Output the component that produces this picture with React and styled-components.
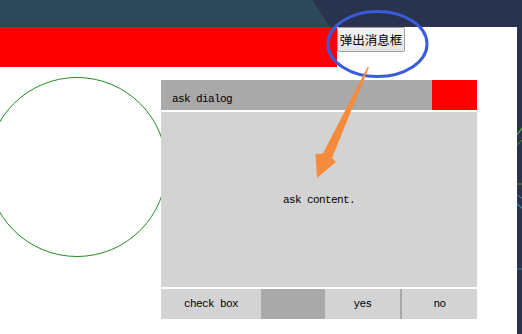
import React from "react"
import styled, { createGlobalStyle } from "styled-components"

const GlobalStyle = createGlobalStyle`
  html, body {
    margin: 0;
    padding: 0;
    background: #2a334d;
    overflow: hidden;
  }
`

const Page = styled.div`
  position: relative;
  width: 522px;
  height: 334px;
  overflow: hidden;
  font-family: "Liberation Mono", "DejaVu Sans Mono", monospace;
`

const Banner = styled.div`
  position: relative;
  height: 27px;
  background: #2a334d;
  &::before {
    content: "";
    position: absolute;
    inset: 0;
    background: #2c4a5b;
    clip-path: polygon(0 0, 312px 0, 330px 27px, 0 27px);
  }
`

const Body = styled.div`
  display: flex;
  height: 307px;
`

const Main = styled.div`
  width: 517px;
  background: #fff;
  overflow: hidden;
`

const TopRow = styled.div`
  display: flex;
  align-items: flex-start;
  height: 40px;
`

const RedBar = styled.div`
  width: 337px;
  height: 40px;
  background: #ff0000;
`

const PopButton = styled.button`
  width: 68px;
  height: 25px;
  padding: 0;
  margin: 0;
  border: 1px solid #a0a0a0;
  border-radius: 2px;
  background: linear-gradient(#f4f4f4, #e4e4e4);
  font-family: "Noto Sans CJK SC", sans-serif;
  font-size: 12.5px;
  color: #000;
  line-height: 22px;
  white-space: nowrap;
`

const Stage = styled.div`
  display: flex;
  align-items: flex-start;
`

const Circle = styled.div`
  flex: none;
  width: 178px;
  height: 178px;
  margin: 10px 0 0 -13px;
  border: 1px solid #1f8f1f;
  border-radius: 50%;
`

const Dialog = styled.div`
  position: relative;
  flex: none;
  width: 316px;
  margin: 13px 0 0 -6px;
  display: flex;
  flex-direction: column;
  gap: 2px;
  background: #fff;
  font-size: 11px;
  letter-spacing: -0.6px;
  color: #000;
`

const Header = styled.div`
  display: flex;
  height: 30px;
`

const Title = styled.div`
  flex: 1;
  background: #a9a9a9;
  display: flex;
  align-items: flex-end;
  padding: 0 0 5px 11px;
`

const CloseBox = styled.div`
  width: 45px;
  background: #ff0000;
`

const Content = styled.div`
  height: 175px;
  background: #d3d3d3;
  display: flex;
  align-items: center;
  justify-content: center;
`

const Footer = styled.div`
  display: grid;
  grid-template-columns: 100px 64px 75px 77px;
  height: 30px;
`

const Cell = styled.div`
  display: flex;
  align-items: center;
  justify-content: center;
  background: ${p => (p.$dark ? "#a9a9a9" : "#d3d3d3")};
  border-left: ${p => (p.$divided ? "2px solid #a9a9a9" : "none")};
`

const SideStrip = styled.svg`
  width: 5px;
  height: 307px;
  display: block;
  background: #2a334d;
`

const Annotations = styled.svg`
  position: absolute;
  left: 0;
  top: 0;
  pointer-events: none;
`

export default function App() {
  return (
    <Page>
      <GlobalStyle />
      <Banner />
      <Body>
        <Main>
          <TopRow>
            <RedBar />
            <PopButton>弹出消息框</PopButton>
          </TopRow>
          <Stage>
            <Circle />
            <Dialog>
              <Header>
                <Title>ask dialog</Title>
                <CloseBox />
              </Header>
              <Content>ask content.</Content>
              <Footer>
                <Cell>check box</Cell>
                <Cell $dark />
                <Cell>yes</Cell>
                <Cell $divided>no</Cell>
              </Footer>
            </Dialog>
          </Stage>
        </Main>
        <SideStrip viewBox="0 0 5 307">
          <path d="M0 108 L5 101" stroke="#4cc22a" strokeWidth="1.2" />
          <path d="M0 118 L5 113" stroke="#3f9a2e" strokeWidth="1" />
          <path d="M0 157 L5 157" stroke="#5f8a4a" strokeWidth="1" />
          <path d="M0 168 L5 171" stroke="#2b8fb5" strokeWidth="1" />
          <path d="M0 177 L5 181" stroke="#2b8fb5" strokeWidth="1.2" />
          <path d="M0 242 L5 242" stroke="#2a7fa5" strokeWidth="1" />
        </SideStrip>
      </Body>
      <Annotations width="522" height="334" viewBox="0 0 522 334">
        <ellipse cx="377.5" cy="44" rx="49.5" ry="32.5" fill="none" stroke="#3a5bdc" strokeWidth="3" />
        <polygon
          points="367.5,67 369,67 332,158 336,162 317,178 315.5,154 323,153.5"
          fill="#f68b3d"
        />
      </Annotations>
    </Page>
  )
}
